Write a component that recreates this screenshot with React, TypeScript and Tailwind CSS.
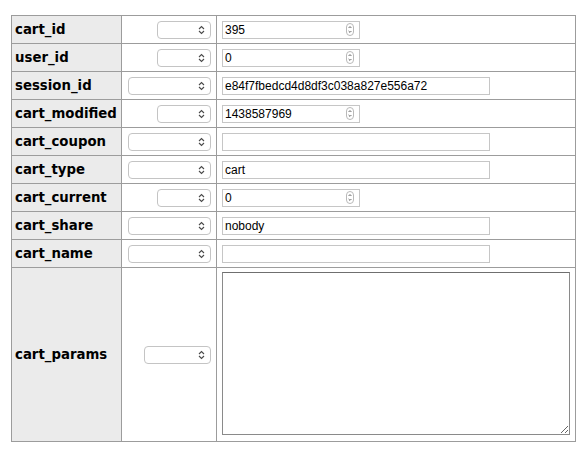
import React from "react";

type Field =
  | { name: string; sel: "sm" | "lg"; kind: "num"; value: string }
  | { name: string; sel: "sm" | "lg"; kind: "text"; value: string };

const fields: Field[] = [
  { name: "cart_id", sel: "sm", kind: "num", value: "395" },
  { name: "user_id", sel: "sm", kind: "num", value: "0" },
  { name: "session_id", sel: "lg", kind: "text", value: "e84f7fbedcd4d8df3c038a827e556a72" },
  { name: "cart_modified", sel: "sm", kind: "num", value: "1438587969" },
  { name: "cart_coupon", sel: "lg", kind: "text", value: "" },
  { name: "cart_type", sel: "lg", kind: "text", value: "cart" },
  { name: "cart_current", sel: "sm", kind: "num", value: "0" },
  { name: "cart_share", sel: "lg", kind: "text", value: "nobody" },
  { name: "cart_name", sel: "lg", kind: "text", value: "" },
];

function Chevrons() {
  return (
    <svg width="7" height="10" viewBox="0 0 7 10" className="shrink-0">
      <path d="M1 4 L3.5 1.5 L6 4" fill="none" stroke="#4a4a4a" strokeWidth="1.1" />
      <path d="M1 6 L3.5 8.5 L6 6" fill="none" stroke="#4a4a4a" strokeWidth="1.1" />
    </svg>
  );
}

function Spinner() {
  return (
    <svg width="8" height="13" viewBox="0 0 8 13" className="shrink-0">
      <rect x="0.5" y="0.5" width="7" height="12" rx="3.5" fill="#fff" stroke="#b9b9b9" />
      <path d="M2.6 5 L4 3.6 L5.4 5" fill="none" stroke="#555" strokeWidth="0.9" />
      <path d="M2.6 8 L4 9.4 L5.4 8" fill="none" stroke="#555" strokeWidth="0.9" />
    </svg>
  );
}

function SelectBox({ width }: { width: string }) {
  return (
    <div
      className={`${width} h-[18px] rounded-[4px] border border-[#c4c4c4] bg-white flex items-center justify-end pr-[5px]`}
    >
      <Chevrons />
    </div>
  );
}

function ValueInput({ field }: { field: Field }) {
  if (field.kind === "num") {
    return (
      <div className="w-[138px] h-[18px] border border-[#c6c6c6] bg-white flex items-center justify-between pl-[2px] pr-[5px]">
        <span className="text-[12px] leading-none text-black">{field.value}</span>
        <Spinner />
      </div>
    );
  }
  return (
    <div className="w-[268px] h-[18px] border border-[#c6c6c6] bg-white flex items-center pl-[2px]">
      <span className="text-[12px] leading-none text-black">{field.value}</span>
    </div>
  );
}

export default function App() {
  const labelCls =
    "bg-[#ebebeb] border-r border-b border-[#9c9c9c] pl-[3px] flex items-center text-[13.3px] font-bold text-black [font-family:'DejaVu_Sans',sans-serif]";
  const selCellCls = "border-r border-b border-[#9c9c9c] flex items-center justify-end pr-[5px]";
  const valCellCls = "border-r border-b border-[#9c9c9c] flex items-center pl-[5px]";

  return (
    <div className="w-[582px] h-[456px] bg-white pt-[15px] pl-[11px] [font-family:'Liberation_Sans',Arial,sans-serif]">
      <div className="grid grid-cols-[110px_95px_359px] w-[565px] border-l border-t border-[#9c9c9c]">
        {fields.map((f) => (
          <React.Fragment key={f.name}>
            <div className={`${labelCls} h-[28px]`}>{f.name}</div>
            <div className={`${selCellCls} h-[28px]`}>
              <SelectBox width={f.sel === "sm" ? "w-[54px]" : "w-[83px]"} />
            </div>
            <div className={`${valCellCls} h-[28px]`}>
              <ValueInput field={f} />
            </div>
          </React.Fragment>
        ))}
        <div className={`${labelCls} h-[174px]`}>cart_params</div>
        <div className={`${selCellCls} h-[174px]`}>
          <SelectBox width="w-[67px]" />
        </div>
        <div className="border-r border-b border-[#9c9c9c] h-[174px] flex items-start pl-[5px] pt-[4px]">
          <textarea
            defaultValue=""
            className="w-[348px] h-[163px] border border-[#8a8a8a] border-t-[#6f6f6f] bg-white resize outline-none"
          />
        </div>
      </div>
    </div>
  );
}
